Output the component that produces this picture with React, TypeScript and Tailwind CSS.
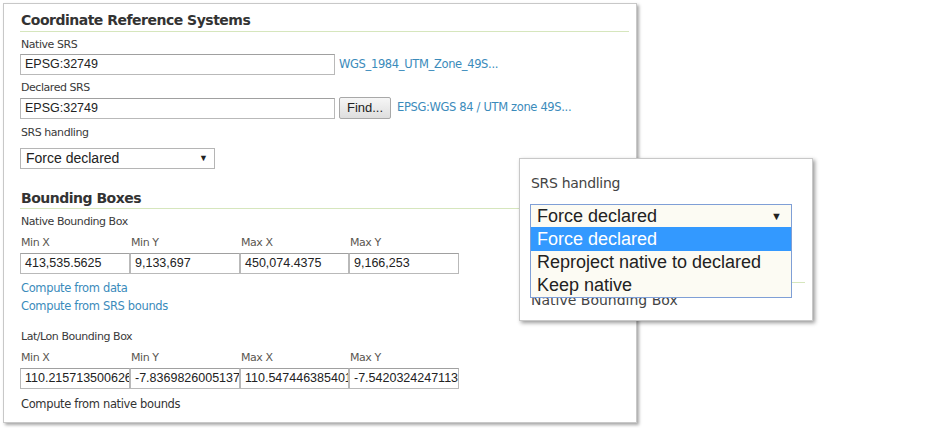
import React from "react";

const label = "font-['DejaVu_Sans',sans-serif] text-[11px] tracking-[-0.45px] text-[#3a3a3a]";
const link = "font-['DejaVu_Sans',sans-serif] text-[11.5px] tracking-[-0.35px] text-[#3b8bbb]";
const heading = "font-['DejaVu_Sans',sans-serif] font-bold text-[14px] tracking-[-0.5px] text-[#333]";
const inputCls =
  "h-[21px] border border-[#b9b9b9] border-t-[#a0a0a0] bg-white px-[4px] font-['Liberation_Sans',Arial,sans-serif] text-[12.5px] leading-[19px] text-[#222] overflow-hidden whitespace-nowrap";

function Field({ w, value }: { w: string; value: string }) {
  return <div className={`${inputCls} ${w}`}>{value}</div>;
}

function BBox({ values }: { values: string[] }) {
  const names = ["Min X", "Min Y", "Max X", "Max Y"];
  const widths = ["w-[110px]", "w-[110px]", "w-[109px]", "w-[110px]"];
  return (
    <>
      <div className="mt-[5px] flex h-[16px] items-center">
        {names.map((n, i) => (
          <div key={n} className={`${widths[i]} pl-[1px] ${label} text-[#5a5650]`}>
            {n}
          </div>
        ))}
      </div>
      <div className="mt-[2px] flex">
        {values.map((v, i) => (
          <Field key={i} w={`${widths[i]} px-[3px]`} value={v} />
        ))}
      </div>
    </>
  );
}

export default function App() {
  return (
    <div className="relative h-[428px] w-[930px] overflow-hidden bg-white">
      <div className="pl-[3px] pt-[3px]">
        <div className="h-[420px] w-[634px] border border-[#c8c8c8] bg-white pl-[16px] pr-[7px] shadow-[2px_2px_3px_rgba(0,0,0,0.35)]">
          <div className={`mt-[6px] h-[22px] border-b border-[#d6e6bd] pl-[1px] leading-[21px] ${heading}`}>
            Coordinate Reference Systems
          </div>
          <div className={`mt-[5px] h-[16px] pl-[1px] leading-[16px] ${label}`}>Native SRS</div>
          <div className="mt-[1px] flex items-center">
            <Field w="w-[315px]" value="EPSG:32749" />
            <span className={`ml-[4px] ${link}`}>WGS_1984_UTM_Zone_49S...</span>
          </div>
          <div className={`mt-[5px] h-[16px] pl-[1px] leading-[16px] ${label}`}>Declared SRS</div>
          <div className="mt-[1px] flex h-[22px] items-center">
            <Field w="w-[315px]" value="EPSG:32749" />
            <button className="ml-[4px] h-[22px] w-[52px] rounded-[2px] border border-[#a8a8a8] bg-gradient-to-b from-[#f6f6f6] to-[#dedede] font-['Liberation_Sans',Arial,sans-serif] text-[13px] text-[#222]">
              Find...
            </button>
            <span className={`ml-[6px] ${link}`}>EPSG:WGS 84 / UTM zone 49S...</span>
          </div>
          <div className={`mt-[6px] h-[16px] pl-[1px] leading-[16px] ${label}`}>SRS handling</div>
          <div className="mt-[7px] flex h-[21px] w-[195px] items-center justify-between border border-[#b5b5b5] bg-white pl-[5px] pr-[6px] font-['Liberation_Sans',Arial,sans-serif] text-[14px] text-[#222]">
            <span>Force declared</span>
            <span className="text-[9px]">▼</span>
          </div>
          <div className={`mt-[19px] h-[21px] border-b border-[#d6e6bd] pl-[1px] leading-[20px] ${heading}`}>
            Bounding Boxes
          </div>
          <div className={`mt-[5px] h-[16px] pl-[1px] leading-[16px] ${label}`}>Native Bounding Box</div>
          <BBox values={["413,535.5625", "9,133,697", "450,074.4375", "9,166,253"]} />
          <div className={`mt-[6px] h-[16px] pl-[1px] leading-[16px] ${link}`}>Compute from data</div>
          <div className={`mt-[2px] h-[16px] pl-[1px] leading-[16px] ${link}`}>Compute from SRS bounds</div>
          <div className={`mt-[15px] h-[16px] pl-[1px] leading-[16px] ${label}`}>Lat/Lon Bounding Box</div>
          <BBox
            values={["110.21571350062682", "-7.8369826005137", "110.54744638540154", "-7.5420324247113"]}
          />
          <div className={`mt-[7px] h-[16px] pl-[1px] leading-[16px] ${link} text-[#333]`}>
            Compute from native bounds
          </div>
        </div>
      </div>

      {/* Zoomed popup */}
      <div className="absolute left-[519px] top-[158px] h-[163px] w-[294px] border border-[#c8c8c8] bg-white pl-[10px] pr-[7px] shadow-[2px_2px_4px_rgba(0,0,0,0.4)]">
        <div className="relative h-full overflow-hidden">
          <div className="mt-[15px] h-[18px] pl-[1px] font-['DejaVu_Sans',sans-serif] text-[14px] leading-[18px] tracking-[-0.3px] text-[#444]">
            SRS handling
          </div>
          <div className="mt-[12px] flex h-[24px] w-[262px] items-center justify-between border border-[#7f9fd6] bg-[#fcfbf3] pl-[6px] pr-[9px] font-['Liberation_Sans',Arial,sans-serif] text-[18px] text-[#222]">
            <span>Force declared</span>
            <span className="text-[11px]">▼</span>
          </div>
          <div className="mt-[30px] h-[25px] border-b border-[#d6e6bd]" />
          <div className="mt-[8px] pl-[1px] font-['DejaVu_Sans',sans-serif] text-[14px] leading-[18px] text-[#444]">
            Native Bounding Box
          </div>
          <div className="absolute left-0 top-[68px] w-[262px] border border-t-0 border-[#7f9fd6] bg-[#fcfbf3] font-['Liberation_Sans',Arial,sans-serif] text-[18px] text-[#222]">
            <div className="h-[24px] bg-[#3399ff] pl-[6px] leading-[24px] text-white">Force declared</div>
            <div className="h-[23px] pl-[6px] leading-[23px]">Reproject native to declared</div>
            <div className="h-[23px] pl-[6px] leading-[22px]">Keep native</div>
          </div>
        </div>
      </div>
    </div>
  );
}
